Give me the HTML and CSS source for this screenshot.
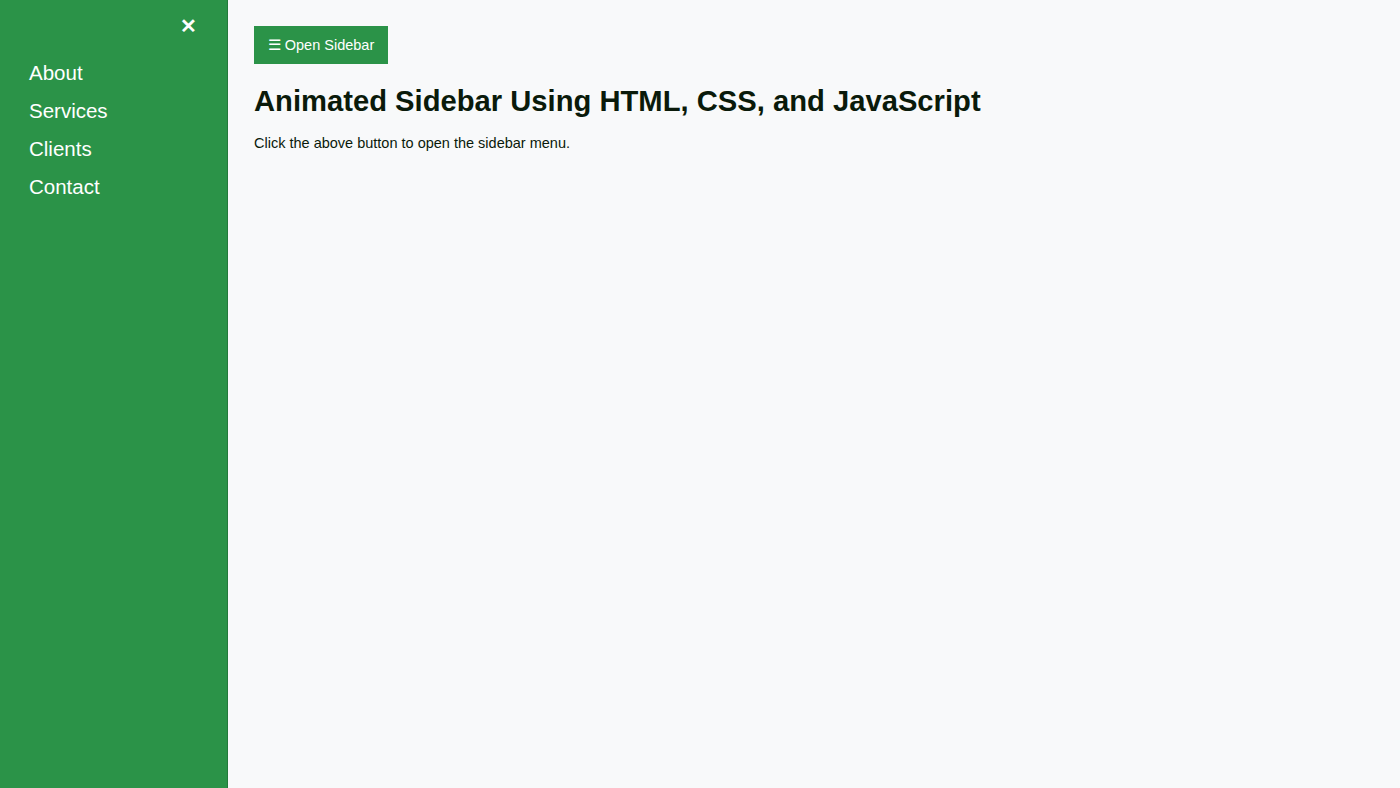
FILE: index.html
```html
<!DOCTYPE html>
<html lang="en">
<head>
<meta charset="utf-8">
<title>Animated Sidebar</title>
<link rel="stylesheet" href="styles.css">
</head>
<body>
<div class="layout">
  <nav class="sidebar">
    <div class="close-row"><a class="close" href="#">&#x2715;</a></div>
    <ul class="menu">
      <li><a href="#">About</a></li>
      <li><a href="#">Services</a></li>
      <li><a href="#">Clients</a></li>
      <li><a href="#">Contact</a></li>
    </ul>
  </nav>
  <main class="main">
    <button class="open-btn">&#x2630; Open Sidebar</button>
    <h1 class="title">Animated Sidebar Using HTML, CSS, and JavaScript</h1>
    <p class="lead">Click the above button to open the sidebar menu.</p>
  </main>
</div>
</body>
</html>
```
FILE: styles.css
```css
html, body {
  margin: 0;
  height: 100%;
}
body {
  font-family: "Liberation Sans", Arial, sans-serif;
  background: #f8f9fa;
  color: #0a1a0a;
}
.layout {
  display: flex;
  height: 100%;
}
.sidebar {
  width: 227px;
  flex: none;
  background: #2b9348;
  border-right: 1px solid #237a3b;
}
.close-row {
  display: flex;
  justify-content: flex-end;
  padding: 12px 30px 0 0;
  height: 30px;
}
.close {
  color: #fff;
  text-decoration: none;
  font-size: 20px;
  font-weight: bold;
  line-height: 28px;
}
.menu {
  list-style: none;
  margin: 0;
  padding: 12px 0 0 29px;
}
.menu li a {
  display: block;
  color: #fff;
  text-decoration: none;
  font-size: 20.5px;
  line-height: 38px;
}
.main {
  flex: 1;
  padding: 26px 26px;
}
.open-btn {
  display: block;
  background: #2b9348;
  color: #fff;
  border: none;
  font-family: "Liberation Sans", Arial, sans-serif;
  font-size: 14.5px;
  height: 38px;
  width: 134px;
  padding: 0;
  cursor: pointer;
}
.title {
  font-size: 29.2px;
  margin: 20px 0 0;
  line-height: 34px;
}
.lead {
  font-size: 14.5px;
  margin: 17px 0 0;
}
```
